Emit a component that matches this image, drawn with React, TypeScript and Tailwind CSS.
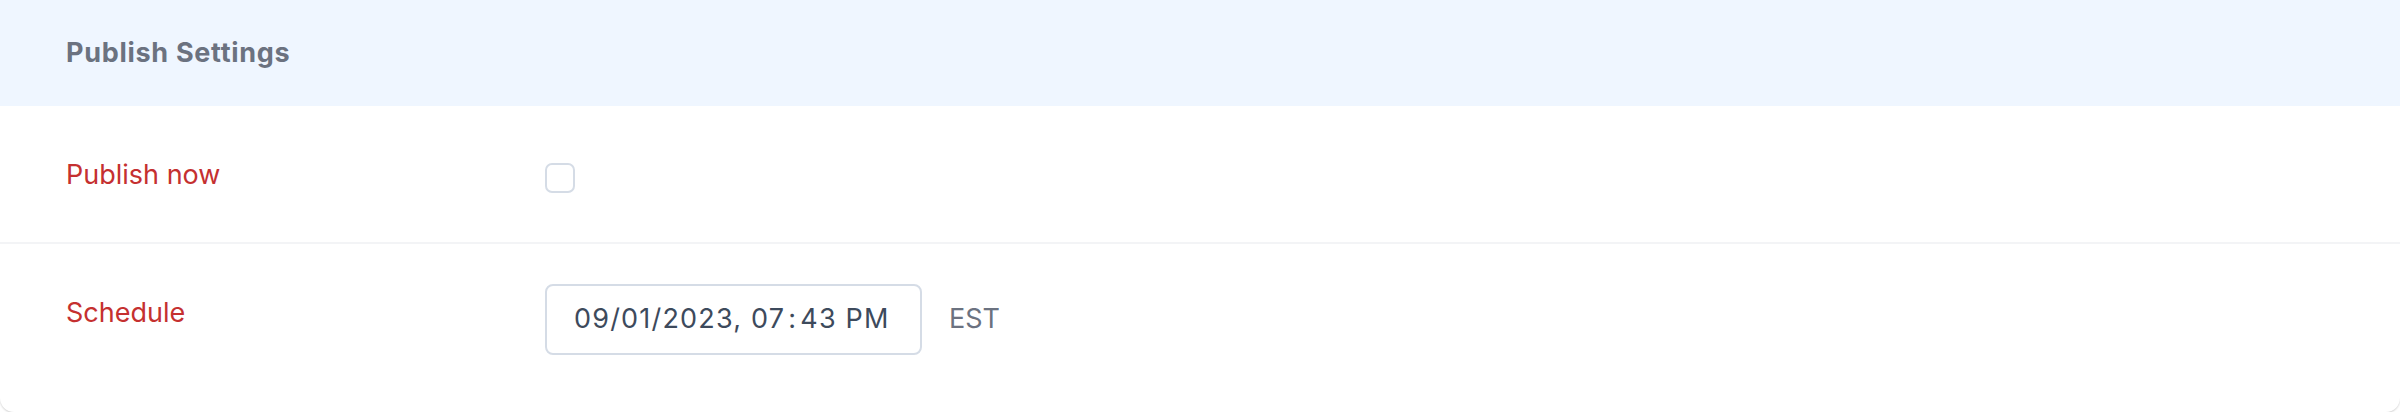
import { useState } from 'react';

const FONT = "font-['Inter','Noto_Sans',sans-serif]";

function Row({
  label,
  labelClass = '',
  children,
  className,
}: {
  label: string;
  labelClass?: string;
  children: React.ReactNode;
  className: string;
}) {
  return (
    <div className={`flex items-start px-[66px] ${className}`}>
      <div className={`w-[479px] shrink-0 text-[27px] leading-[40px] text-[#c53030] ${labelClass}`}>{label}</div>
      {children}
    </div>
  );
}

export default function App() {
  const [now, setNow] = useState(false);

  return (
    <div className={`${FONT} bg-white`}>
      <div className="w-full overflow-hidden rounded-b-[14px] bg-white shadow-[0_1px_2px_rgba(0,0,0,0.18)]">
        <div className="flex h-[106px] items-center bg-[#eff6ff] px-[66px]">
          <h2 className="text-[27px] font-bold tracking-[0.7px] text-[#6b7280]">Publish Settings</h2>
        </div>

        <Row label="Publish now" className="h-[136px] pt-[49px]">
          <button
            type="button"
            onClick={() => setNow(!now)}
            className="mt-[8px] h-[30px] w-[30px] rounded-[7px] border-2 border-[#d5dce6] bg-white"
          />
        </Row>

        <div className="h-[2px] bg-[#f3f4f6]" />

        <Row label="Schedule" labelClass="mt-[9px]" className="h-[168px] pt-[40px]">
          <div className="flex items-center gap-[27px]">
            <div className="flex h-[71px] w-[377px] items-center rounded-[8px] border-2 border-[#d5dce6] px-[27px] text-[27px] text-[#3d4a5c]">
              <span className="whitespace-nowrap tracking-[1.2px]">
                09/01/2023, 07<span className="mx-[3px]">:</span>43 PM
              </span>
            </div>
            <span className="text-[27px] text-[#6b7280]">EST</span>
          </div>
        </Row>
      </div>
    </div>
  );
}
